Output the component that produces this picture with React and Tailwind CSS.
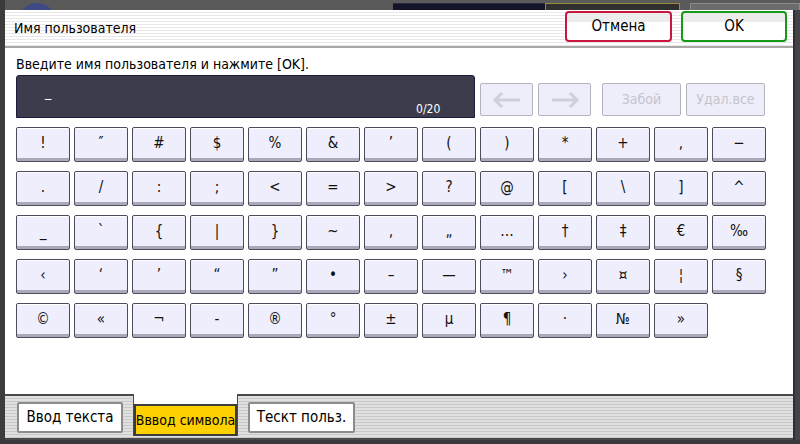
import { useState } from "react";

const rows = [
  ["!", "″", "#", "$", "%", "&", "’", "(", ")", "*", "+", ",", "−"],
  [".", "/", ":", ";", "<", "=", ">", "?", "@", "[", "\\", "]", "^"],
  ["_", "`", "{", "|", "}", "~", "‚", "„", "…", "†", "‡", "€", "‰"],
  ["‹", "‘", "’", "“", "”", "•", "–", "—", "™", "›", "¤", "¦", "§"],
  ["©", "«", "¬", "-", "®", "°", "±", "µ", "¶", "·", "№", "»"],
];

const font = { fontFamily: '"DejaVu Sans Condensed", "Liberation Sans", sans-serif' };

function Key({ label, onPress }) {
  return (
    <button
      type="button"
      onClick={() => onPress(label)}
      className="h-[35px] w-[54px] rounded-[2px] border border-[#4c4c5c] bg-[#eeeefc] text-[15px] leading-none text-[#111] shadow-[inset_0_1px_0_#ffffff,inset_0_-3px_0_#a9a9b9] flex items-center justify-center pb-[2px]"
    >
      {label}
    </button>
  );
}

function Arrow({ dir }) {
  return (
    <svg width="30" height="16" viewBox="0 0 30 16">
      {dir === "left" ? (
        <path d="M28 8H3M10 1L3 8l7 7" fill="none" stroke="#cfcfd8" strokeWidth="3" />
      ) : (
        <path d="M2 8h25M20 1l7 7-7 7" fill="none" stroke="#cfcfd8" strokeWidth="3" />
      )}
    </svg>
  );
}

export default function App() {
  const [value, setValue] = useState("");

  function handleKey(ch) {
    if (value.length < 20) setValue(value + ch);
  }

  return (
    <div className="w-[800px] h-[444px] bg-[#444448] flex flex-col overflow-hidden" style={font}>
      {/* screen behind the dialog */}
      <div className="h-[10px] flex items-start overflow-hidden bg-[#5a5a5a]">
        <div className="w-[5px] h-full bg-[#3a3a3a]" />
        <div className="ml-[13px] mt-[3px] w-[38px] h-[38px] rounded-full bg-[#3d4a84]" />
        <div className="ml-[337px] mt-[3px] w-[152px] h-[10px] bg-[#141428] border-t border-[#2a2a40]" />
        <div className="mt-[3px] w-[135px] h-[10px] border border-[#9c8a3c] bg-[#303030]" />
        <div className="ml-[10px] mt-[3px] flex-1 h-[10px] border border-[#8c8c8c] bg-[#6c6c6c]" />
      </div>

      <div className="flex flex-1">
        <div className="w-[5px] bg-[#3c3c3c]" />
        <div className="w-[790px] flex flex-col bg-white rounded-tl-[3px] border-r-2 border-[#2e2e34]">
          {/* title bar */}
          <div className="h-[38px] flex items-center border-b-2 border-[#a8a8a8] bg-[repeating-linear-gradient(180deg,#ffffff_0px,#ffffff_2px,#e8e8e8_2px,#e8e8e8_3px)]">
            <span className="ml-[9px] mt-[1px] text-[14px] text-black">Имя пользователя</span>
            <button
              type="button"
              className="ml-auto w-[107px] h-[31px] mb-[3px] rounded-[4px] border-2 border-[#c8163f] bg-[linear-gradient(180deg,#ececec_0%,#ececec_35%,#ffffff_35%)] text-[15px] text-black"
            >
              Отмена
            </button>
            <button
              type="button"
              className="ml-[9px] mr-[6px] w-[106px] h-[31px] mb-[3px] rounded-[4px] border-2 border-[#149a14] bg-[linear-gradient(180deg,#ececec_0%,#ececec_35%,#ffffff_35%)] text-[15px] text-black"
            >
              OK
            </button>
          </div>

          {/* content */}
          <div className="flex-1 flex flex-col pl-[11px] pt-[7px]">
            <p className="text-[14px] leading-[18px] text-black">Введите имя пользователя и нажмите [OK].</p>
            <div className="mt-[2px] flex items-end">
              <div className="relative w-[459px] h-[43px] rounded-t-[3px] border border-[#1c1c3c] bg-[#3c3c4c]">
                <span className="absolute left-[28px] top-[6px] text-[14px] text-white">{value}_</span>
                <span className="absolute left-[399px] top-[24px] text-[12px] text-white">{value.length}/20</span>
              </div>
              <div className="ml-[5px] mb-[2px] flex gap-[5px]">
                <button type="button" disabled className="w-[53px] h-[33px] rounded-[2px] border border-[#b4b4c0] bg-[#eeeefa] flex items-center justify-center">
                  <Arrow dir="left" />
                </button>
                <button type="button" disabled className="w-[53px] h-[33px] rounded-[2px] border border-[#b4b4c0] bg-[#eeeefa] flex items-center justify-center">
                  <Arrow dir="right" />
                </button>
              </div>
              <div className="ml-[11px] mb-[2px] flex gap-[5px]">
                <button type="button" disabled className="w-[79px] h-[33px] rounded-[2px] border border-[#b4b4c0] bg-[#eeeefa] text-[14px] text-[#c4c4cc]">
                  Забой
                </button>
                <button type="button" disabled className="w-[79px] h-[33px] rounded-[2px] border border-[#b4b4c0] bg-[#eeeefa] text-[14px] text-[#c4c4cc]">
                  Удал.все
                </button>
              </div>
            </div>

            <div className="mt-[9px] grid grid-cols-[repeat(13,54px)] gap-x-[4px] gap-y-[9px]">
              {rows.flat().map((ch, i) => (
                <Key key={i} label={ch} onPress={handleKey} />
              ))}
            </div>
          </div>

          {/* input mode tabs */}
          <div className="h-[46px] flex items-start pl-[12px] border-t-2 border-[#4a4a4a] border-b-2 bg-[repeating-linear-gradient(180deg,#e0e0e0_0px,#e0e0e0_2px,#c9c9c9_2px,#c9c9c9_3px)]">
            <button type="button" className="mt-[6px] w-[106px] h-[31px] rounded-[2px] border-2 border-[#8c8c8c] bg-white text-[15px] text-black">
              Ввод текста
            </button>
            <div className="ml-[10px] -mt-[2px] w-[105px] h-[42px] bg-white border-x border-[#4a4a4a] flex items-end">
              <div className="w-full h-[32px] border-2 border-[#3c3c3c] bg-[#ffd000] flex items-center justify-center whitespace-nowrap text-[14px] text-black">
                Вввод символа
              </div>
            </div>
            <button type="button" className="ml-[10px] mt-[6px] w-[107px] h-[31px] rounded-[2px] border-2 border-[#8c8c8c] bg-white text-[15px] text-black">
              Тескт польз.
            </button>
          </div>
        </div>
      </div>
      <div className="h-[4px] bg-[#3a3a3e]" />
    </div>
  );
}
